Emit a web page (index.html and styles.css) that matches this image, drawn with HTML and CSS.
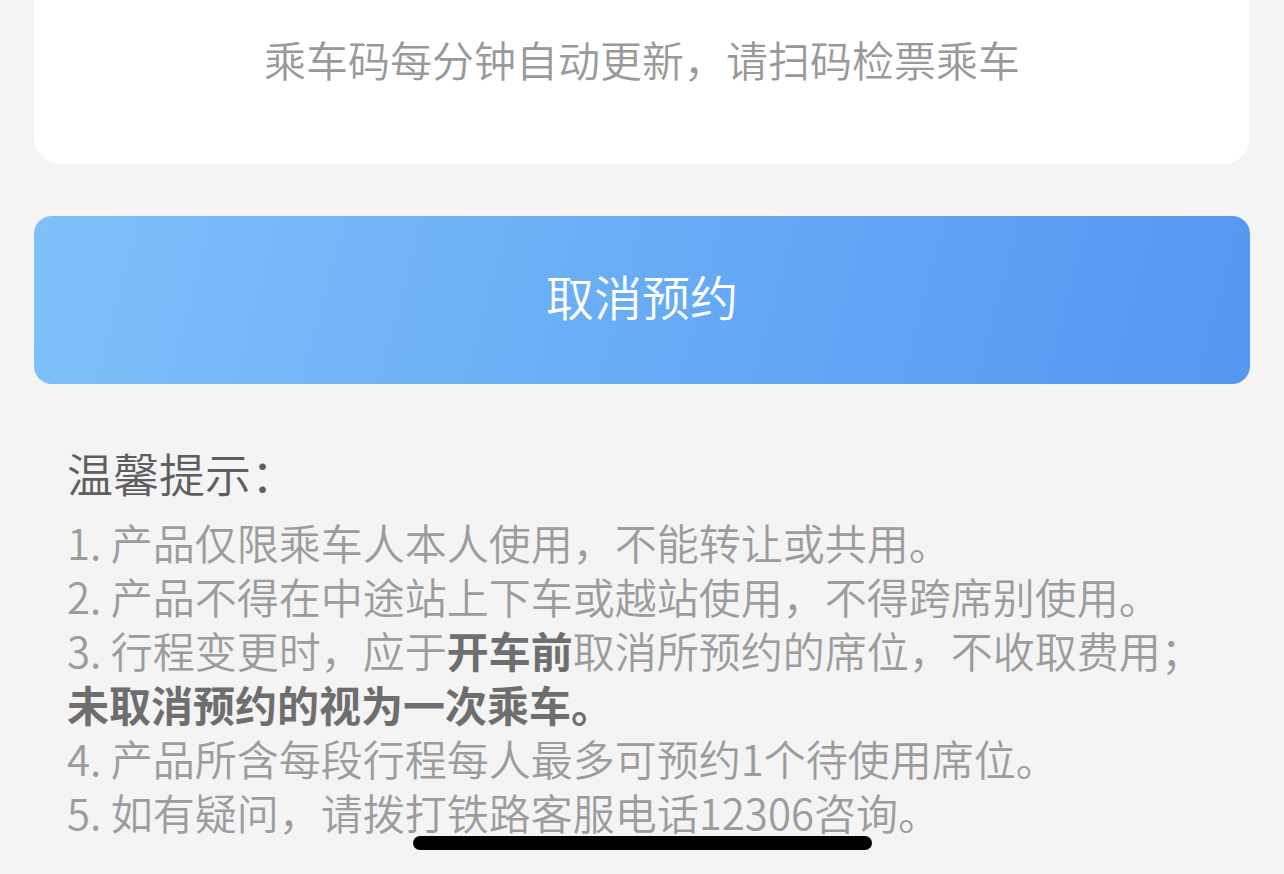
FILE: index.html
```html
<!DOCTYPE html>
<html lang="zh-CN">
<head>
<meta charset="utf-8">
<title>乘车码</title>
<link rel="stylesheet" href="styles.css">
</head>
<body>
<div class="page">
  <div class="card">
    <p class="card-note">乘车码每分钟自动更新，请扫码检票乘车</p>
  </div>
  <button class="cancel-btn" type="button">取消预约</button>
  <section class="tips">
    <h2 class="tips-title">温馨提示：</h2>
    <ol class="tips-list">
      <li>1. 产品仅限乘车人本人使用，不能转让或共用。</li>
      <li>2. 产品不得在中途站上下车或越站使用，不得跨席别使用。</li>
      <li>3. 行程变更时，应于<b>开车前</b>取消所预约的席位，不收取费用；<br><b>未取消预约的视为一次乘车。</b></li>
      <li>4. 产品所含每段行程每人最多可预约1个待使用席位。</li>
      <li>5. 如有疑问，请拨打铁路客服电话12306咨询。</li>
    </ol>
  </section>
</div>
<div class="home-indicator"></div>
</body>
</html>
```

FILE: styles.css
```css
* { box-sizing: border-box; }
html, body {
  margin: 0;
  padding: 0;
  background: #f4f4f4;
}
body {
  font-family: "Noto Sans CJK SC", "Noto Sans", sans-serif;
  width: 1284px;
  height: 874px;
  overflow: hidden;
  position: relative;
}
.page {
  padding: 0 34px;
  display: flex;
  flex-direction: column;
}
.card {
  background: #ffffff;
  border-radius: 0 0 26px 26px;
  height: 164px;
  padding-top: 35px;
}
.card-note {
  margin: 0;
  text-align: center;
  font-size: 42px;
  font-weight: 350;
  line-height: 48px;
  color: #999999;
}
.cancel-btn {
  margin-top: 52px;
  height: 168px;
  width: 100%;
  border: none;
  border-radius: 18px;
  background: linear-gradient(105deg, #7ec1f9 0%, #6aaef6 45%, #5596f0 100%);
  color: #ffffff;
  font-family: inherit;
  font-size: 48px;
  font-weight: 350;
  line-height: 1;
  padding: 0 0 10px;
}
.tips {
  padding: 0 33px;
  margin-top: 60px;
}
.tips-title {
  margin: 0;
  font-weight: 350;
  font-size: 46px;
  line-height: 56px;
  color: #5e5e5e;
}
.tips-list {
  list-style: none;
  margin: 15px 0 0;
  padding: 0;
  font-size: 42px;
  font-weight: 350;
  line-height: 54px;
  color: #9c9c9c;
}
.tips-list li { margin: 0; }
.tips-list b {
  font-weight: 700;
  color: #6e6e6e;
}
.home-indicator {
  position: absolute;
  left: 413px;
  top: 836px;
  width: 459px;
  height: 14px;
  border-radius: 7px;
  background: #000000;
}
```
